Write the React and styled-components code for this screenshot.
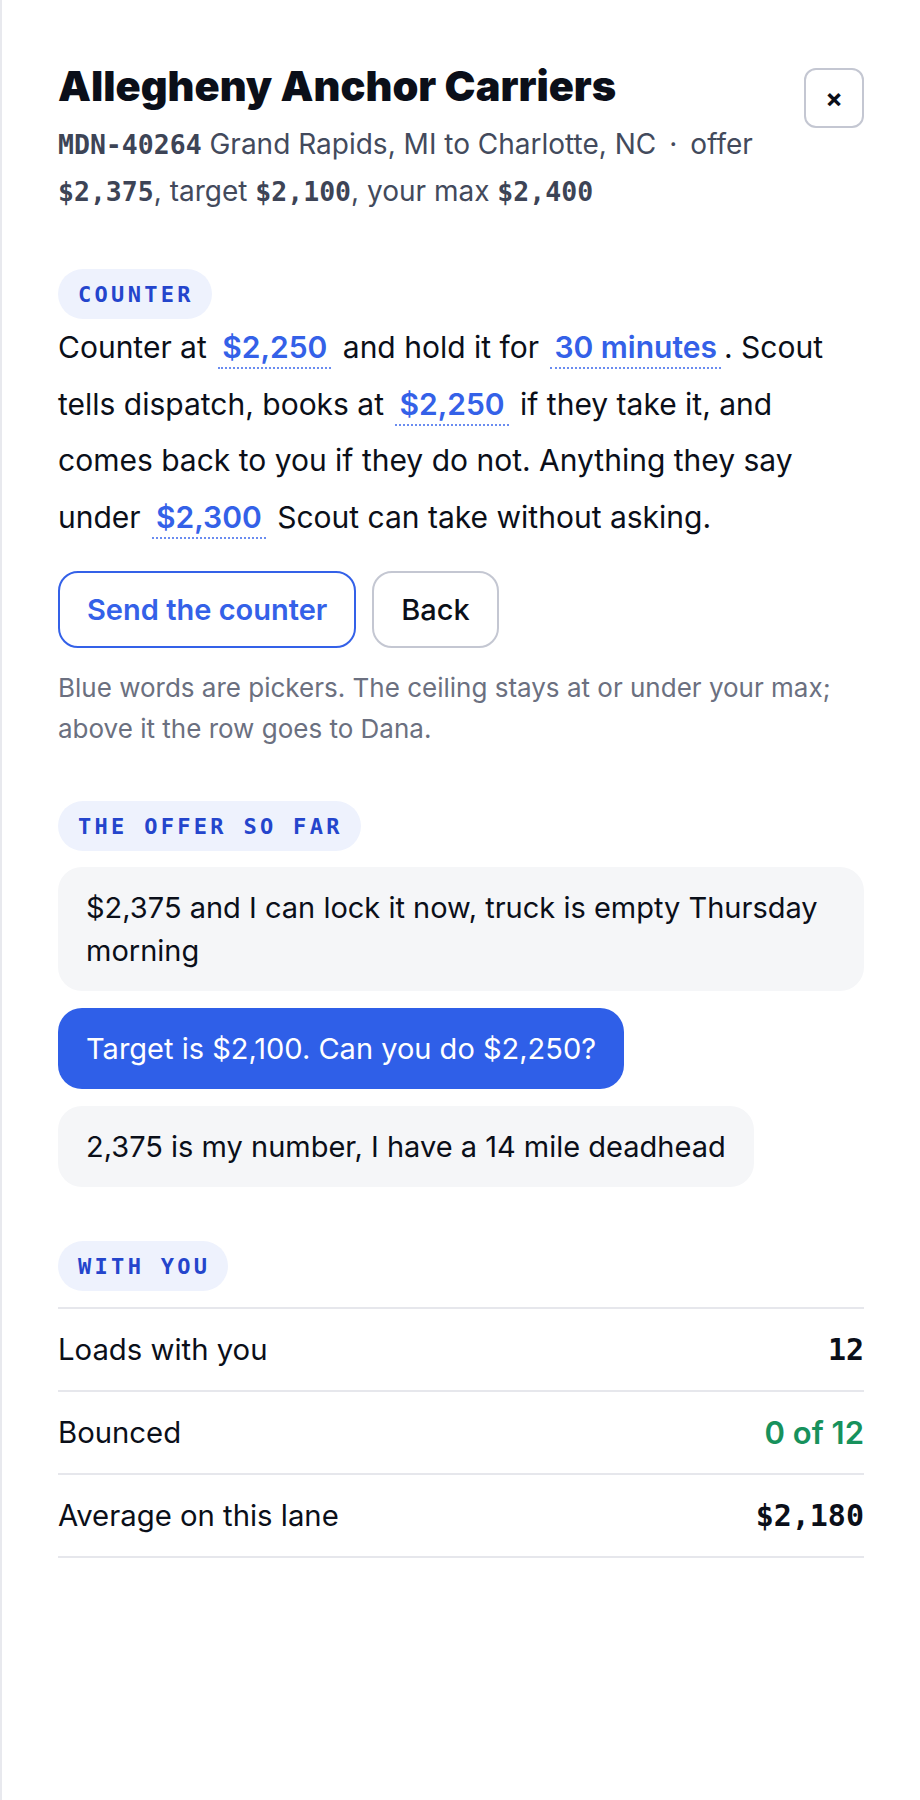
import React from "react";
import styled, { createGlobalStyle } from "styled-components";

const GlobalStyle = createGlobalStyle`
  html, body {
    margin: 0;
    padding: 0;
    background: #ffffff;
  }
  body {
    font-family: Inter, "Noto Sans", sans-serif;
    color: #0b0f19;
  }
`;

const mono = `"DejaVu Sans Mono", "Liberation Mono", monospace`;

const Panel = styled.aside`
  box-sizing: border-box;
  min-height: 1800px;
  border-left: 2px solid #e8e9ee;
  padding: 62px 56px 80px 56px;
  display: flex;
  flex-direction: column;
`;

const Header = styled.header`
  display: flex;
  align-items: flex-start;
  justify-content: space-between;
  gap: 24px;
`;

const TitleBlock = styled.div`
  display: flex;
  flex-direction: column;
  gap: 11px;
`;

const Title = styled.h1`
  margin: 0;
  font-size: 41.5px;
  line-height: 48px;
  font-weight: 900;
  letter-spacing: 0;
  color: #0b0f19;
`;

const Sub = styled.p`
  margin: 0;
  font-size: 28px;
  line-height: 46px;
  color: #434a5c;
`;

const Code = styled.span`
  font-family: ${mono};
  font-weight: 700;
  font-size: 26.5px;
  color: #3d4456;
`;

const Dot = styled.span`
  margin: 0 13px;
`;

const CloseButton = styled.button`
  flex: none;
  margin-top: 6px;
  width: 60px;
  height: 60px;
  box-sizing: border-box;
  border: 2px solid #c4c7d2;
  border-radius: 12px;
  background: #fff;
  font-family: Inter, sans-serif;
  font-size: 26px;
  font-weight: 700;
  color: #0b0f19;
  display: flex;
  align-items: center;
  justify-content: center;
  padding: 0;
`;

const Section = styled.section`
  margin-top: ${(p) => p.$gap || 54}px;
  display: flex;
  flex-direction: column;
  align-items: flex-start;
`;

const Label = styled.div`
  box-sizing: border-box;
  height: 50px;
  display: inline-flex;
  align-items: center;
  padding: 0 18px 0 20px;
  border-radius: 25px;
  background: #eef2fd;
  color: #2445cc;
  font-family: ${mono};
  font-weight: 700;
  font-size: 22px;
  letter-spacing: 0.15em;
  margin-bottom: ${(p) => p.$mb || 0}px;
`;

const Body = styled.p`
  margin: 0;
  font-size: 30px;
  line-height: 56.6px;
  color: #0b0f19;
`;

const Picker = styled.span`
  display: inline-block;
  line-height: 40px;
  padding: 0 4px;
  margin: 0 3px;
  color: #3461e8;
  font-weight: 600;
  border-bottom: 2px dotted #6a8cf0;
`;

const Actions = styled.div`
  display: flex;
  gap: 16px;
  margin-top: 26px;
`;

const Button = styled.button`
  box-sizing: border-box;
  height: 77px;
  padding: 0 ${(p) => (p.$primary ? 27 : 27)}px;
  border-radius: 20px;
  border: 2px solid ${(p) => (p.$primary ? "#3461e8" : "#c4c7d2")};
  background: #fff;
  color: ${(p) => (p.$primary ? "#3461e8" : "#0b0f19")};
  font-family: Inter, sans-serif;
  font-size: 29px;
  font-weight: ${(p) => (p.$primary ? 600 : 500)};
`;

const Hint = styled.p`
  margin: 19px 0 0;
  font-size: 26px;
  line-height: 41px;
  color: #6b7080;
`;

const Thread = styled.div`
  display: flex;
  flex-direction: column;
  align-items: flex-start;
  gap: 17px;
  width: 100%;
`;

const Bubble = styled.div`
  box-sizing: border-box;
  max-width: 100%;
  padding: 19px 28px;
  border-radius: 24px;
  font-size: 29px;
  line-height: 43px;
  background: ${(p) => (p.$mine ? "#2f5fe8" : "#f5f6f8")};
  color: ${(p) => (p.$mine ? "#ffffff" : "#0b0f19")};
  width: ${(p) => (p.$full ? "100%" : "auto")};
`;

const Table = styled.div`
  width: 100%;
  border-top: 2px solid #e6e7ec;
`;

const Row = styled.div`
  display: flex;
  align-items: center;
  justify-content: space-between;
  height: 81px;
  border-bottom: 2px solid #e6e7ec;
  font-size: 29.3px;
  color: #0b0f19;
`;

const Value = styled.span`
  font-family: ${(p) => (p.$mono ? mono : "Inter, sans-serif")};
  font-weight: ${(p) => (p.$mono ? 700 : 600)};
  font-size: ${(p) => (p.$mono ? 30 : 31)}px;
  color: ${(p) => (p.$good ? "#17915c" : "#0b0f19")};
`;

const stats = [
  { label: "Loads with you", value: "12", mono: true },
  { label: "Bounced", value: "0 of 12", good: true },
  { label: "Average on this lane", value: "$2,180", mono: true },
];

export default function App() {
  return (
    <>
      <GlobalStyle />
      <Panel>
        <Header>
          <TitleBlock>
            <Title>Allegheny Anchor Carriers</Title>
            <Sub>
              <Code>MDN-40264</Code> Grand Rapids, MI to Charlotte, NC
              <Dot>·</Dot>offer <Code>$2,375</Code>, target <Code>$2,100</Code>,
              your max <Code>$2,400</Code>
            </Sub>
          </TitleBlock>
          <CloseButton aria-label="Close">×</CloseButton>
        </Header>

        <Section>
          <Label>COUNTER</Label>
          <Body>
            Counter at <Picker>$2,250</Picker> and hold it for{" "}
            <Picker>30 minutes</Picker>. Scout tells dispatch, books at{" "}
            <Picker>$2,250</Picker> if they take it, and comes back to you if
            they do not. Anything they say under <Picker>$2,300</Picker> Scout
            can take without asking.
          </Body>
          <Actions>
            <Button $primary>Send the counter</Button>
            <Button>Back</Button>
          </Actions>
          <Hint>
            Blue words are pickers. The ceiling stays at or under your max;
            above it the row goes to Dana.
          </Hint>
        </Section>

        <Section $gap={52}>
          <Label $mb={16}>THE OFFER SO FAR</Label>
          <Thread>
            <Bubble $full>
              $2,375 and I can lock it now, truck is empty Thursday morning
            </Bubble>
            <Bubble $mine>Target is $2,100. Can you do $2,250?</Bubble>
            <Bubble>2,375 is my number, I have a 14 mile deadhead</Bubble>
          </Thread>
        </Section>

        <Section $gap={54}>
          <Label $mb={16}>WITH YOU</Label>
          <Table>
            {stats.map((s) => (
              <Row key={s.label}>
                <span>{s.label}</span>
                <Value $mono={s.mono} $good={s.good}>
                  {s.value}
                </Value>
              </Row>
            ))}
          </Table>
        </Section>
      </Panel>
    </>
  );
}
